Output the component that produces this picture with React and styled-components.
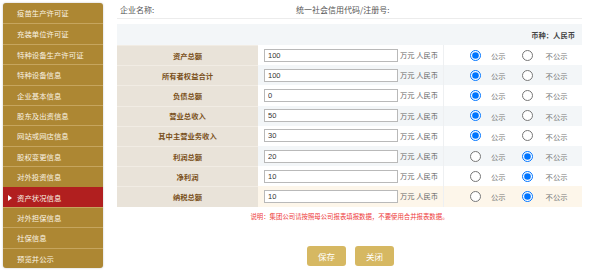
import { useState } from "react";
import styled, { createGlobalStyle } from "styled-components";

const GlobalStyle = createGlobalStyle`
  html, body { margin: 0; padding: 0; background: #fff; }
  body { font-family: "Noto Sans CJK SC", "Liberation Sans", sans-serif; }
  * { box-sizing: border-box; }
`;

const menu = [
  "疫苗生产许可证",
  "充装单位许可证",
  "特种设备生产许可证",
  "特种设备信息",
  "企业基本信息",
  "股东及出资信息",
  "网站或网店信息",
  "股权变更信息",
  "对外投资信息",
  "资产状况信息",
  "对外担保信息",
  "社保信息",
  "预览并公示",
];

const rows = [
  { label: "资产总额", value: "100", show: true },
  { label: "所有者权益合计", value: "100", show: true },
  { label: "负债总额", value: "0", show: true },
  { label: "营业总收入", value: "50", show: true },
  { label: "其中主营业务收入", value: "30", show: true },
  { label: "利润总额", value: "20", show: false },
  { label: "净利润", value: "10", show: false },
  { label: "纳税总额", value: "10", show: false },
];

export default function App() {
  const [data, setData] = useState(rows);
  const setShow = (i, show) =>
    setData((d) => d.map((r, j) => (j === i ? { ...r, show } : r)));

  return (
    <>
      <GlobalStyle />
      <Page>
        <Sidebar>
          {menu.map((m) => (
            <MenuItem key={m} $active={m === "资产状况信息"}>
              {m}
            </MenuItem>
          ))}
        </Sidebar>
        <Main>
          <InfoBar>
            <InfoName>企业名称:</InfoName>
            <InfoCode>统一社会信用代码/注册号:</InfoCode>
          </InfoBar>
          <Table>
            <HeadRow>币种：人民币</HeadRow>
            {data.map((r, i) => (
              <Row key={r.label} $alt={i % 2 === 1} $hover={i === data.length - 1}>
                <Label>{r.label}</Label>
                <InputCell>
                  <TextInput defaultValue={r.value} />
                  <Unit>万元 人民币</Unit>
                </InputCell>
                <RadioCell>
                  <Radio
                    type="radio"
                    name={"pub" + i}
                    checked={r.show}
                    onChange={() => setShow(i, true)}
                  />
                  <RadioText>公示</RadioText>
                  <Radio
                    type="radio"
                    name={"pub" + i}
                    checked={!r.show}
                    onChange={() => setShow(i, false)}
                    $second
                  />
                  <RadioText>不公示</RadioText>
                </RadioCell>
              </Row>
            ))}
          </Table>
          <Note>说明：集团公司请按照母公司报表填报数据，不要使用合并报表数据。</Note>
          <Buttons>
            <Button>保存</Button>
            <Button>关闭</Button>
          </Buttons>
        </Main>
      </Page>
    </>
  );
}

const Page = styled.div`
  display: flex;
  align-items: flex-start;
  width: 590px;
  height: 275px;
  overflow: hidden;
`;

const Sidebar = styled.div`
  margin: 3px 0 0 3px;
  width: 100px;
  background: #ad8733;
  border-radius: 3px;
  overflow: hidden;
  box-shadow: 0 0 2px rgba(0, 0, 0, 0.25);
`;

const MenuItem = styled.div`
  position: relative;
  height: 20.4px;
  line-height: 20px;
  padding-left: 14px;
  font-size: 7.4px;
  color: #faf3e3;
  background: ${(p) => (p.$active ? "#b11f1f" : "transparent")};
  border-top: 1px solid ${(p) => (p.$active ? "#b11f1f" : "#c6a55e")};
  white-space: nowrap;
  &:first-child { border-top: none; }
  ${(p) =>
    p.$active &&
    `&::before {
      content: "";
      position: absolute;
      left: 5px;
      top: 7px;
      border-left: 4px solid #fff;
      border-top: 3px solid transparent;
      border-bottom: 3px solid transparent;
    }`}
`;

const Main = styled.div`
  margin-left: 14px;
  width: 465px;
  display: flex;
  flex-direction: column;
`;

const InfoBar = styled.div`
  display: flex;
  height: 19px;
  align-items: center;
  border-bottom: 1px solid #ececec;
  font-size: 8px;
  color: #555;
  padding-left: 3px;
`;

const InfoName = styled.span`
  width: 176px;
`;

const InfoCode = styled.span``;

const Table = styled.div`
  margin-top: 5px;
  display: flex;
  flex-direction: column;
`;

const HeadRow = styled.div`
  height: 21px;
  background: #f3f6f8;
  display: flex;
  align-items: center;
  justify-content: flex-end;
  padding-right: 7px;
  font-size: 7.3px;
  font-weight: bold;
  color: #444;
`;

const Row = styled.div`
  display: grid;
  grid-template-columns: 141px 186px 138px;
  height: 20.2px;
  background: ${(p) => (p.$hover ? "#fdf6ea" : p.$alt ? "#f3f6f8" : "#fff")};
`;

const Label = styled.div`
  background: #e9e3d9;
  border-top: 1px solid #f1ece4;
  display: flex;
  align-items: center;
  justify-content: center;
  font-size: 7.3px;
  font-weight: bold;
  color: #7a5019;
`;

const InputCell = styled.div`
  display: flex;
  align-items: center;
  padding-left: 6px;
  border-right: 1px solid #eef0f2;
`;

const TextInput = styled.input`
  width: 134px;
  height: 13px;
  border: 1px solid #b9b9b9;
  border-radius: 0;
  padding: 0 0 0 3px;
  font-family: "Liberation Sans", sans-serif;
  font-size: 7.5px;
  color: #333;
  background: #fff;
  outline: none;
`;

const Unit = styled.span`
  margin-left: 2px;
  font-size: 7.3px;
  color: #666;
  white-space: nowrap;
`;

const RadioCell = styled.div`
  display: flex;
  align-items: center;
  padding-left: 26px;
`;

const Radio = styled.input`
  width: 11px;
  height: 11px;
  margin: 0 0 0 ${(p) => (p.$second ? "16px" : "0")};
`;

const RadioText = styled.span`
  margin: 2px 0 0 10px;
  font-size: 7.3px;
  color: #777;
  &:last-child { margin-left: 13px; }
`;

const Note = styled.div`
  margin-top: 5px;
  text-align: center;
  font-size: 6.4px;
  color: #ee3b3b;
`;

const Buttons = styled.div`
  margin-top: 25px;
  display: flex;
  justify-content: center;
  gap: 9px;
  padding-left: 2px;
`;

const Button = styled.button`
  width: 39px;
  height: 20px;
  border: none;
  border-radius: 3px;
  background: #d6b862;
  color: #fff;
  font-family: "Noto Sans CJK SC", sans-serif;
  font-size: 8.5px;
  padding: 0;
  cursor: pointer;
`;
